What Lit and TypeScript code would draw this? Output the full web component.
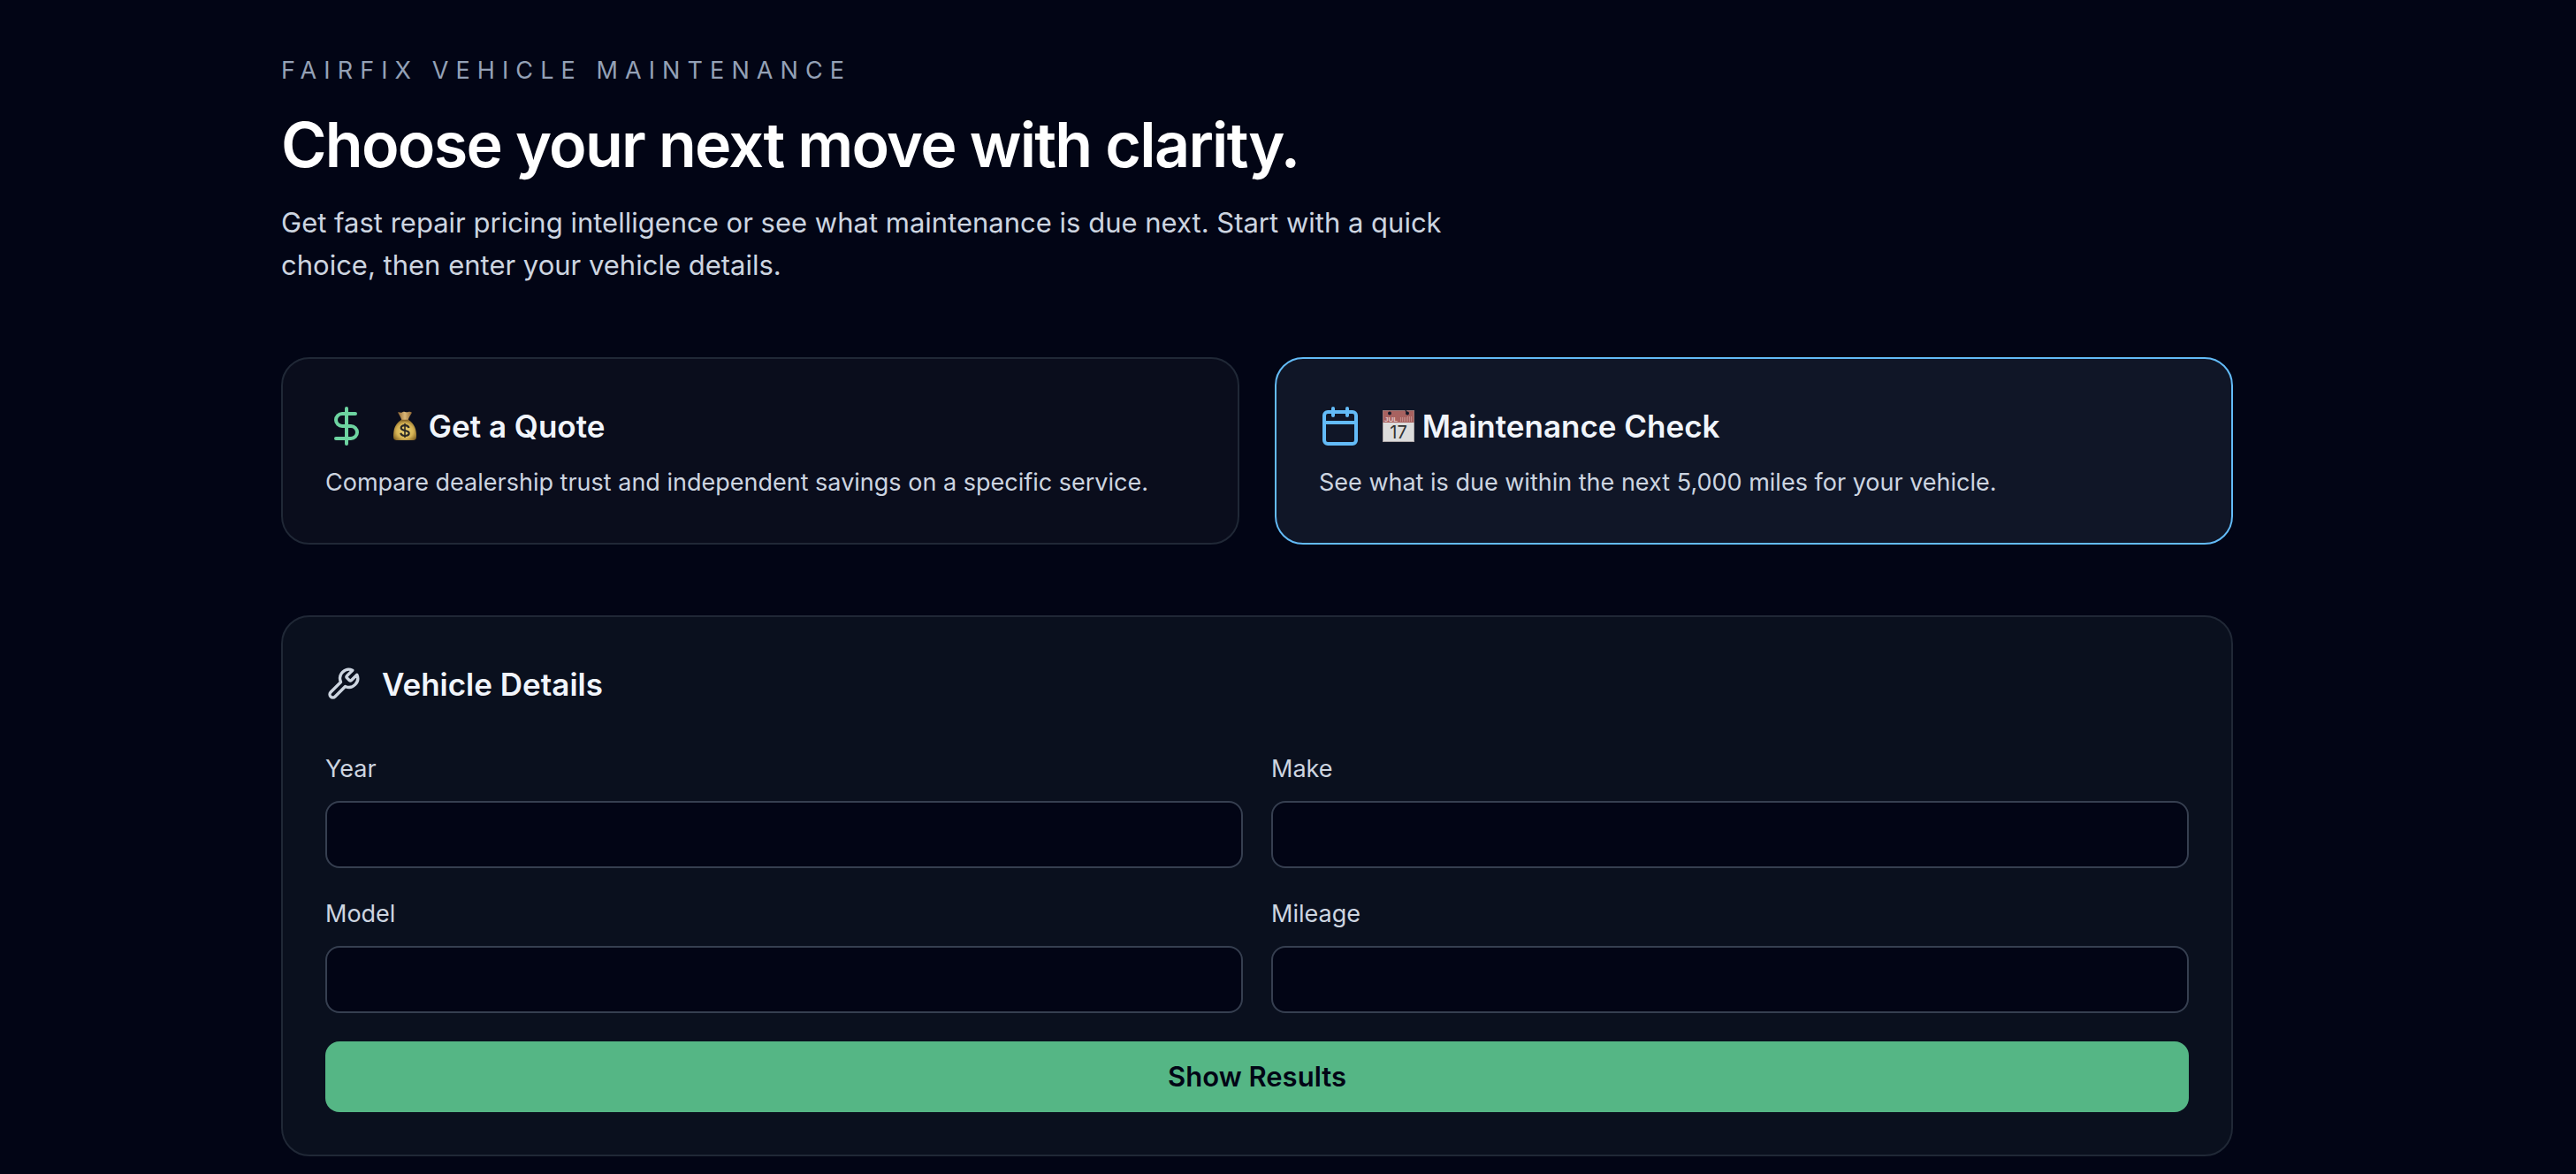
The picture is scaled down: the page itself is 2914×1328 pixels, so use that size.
import { LitElement, html, css } from "lit";
import { customElement, state } from "lit/decorators.js";
import { classMap } from "lit/directives/class-map.js";

const dollarIcon = html`<svg class="icon green" viewBox="0 0 24 24" aria-hidden="true">
  <path d="M12 2v20" />
  <path d="M17 5H9.500a3.500 3.500 0 0 0 0 7h5a3.500 3.500 0 0 1 0 7H6" />
</svg>`;

const calendarIcon = html`<svg class="icon blue" viewBox="0 0 24 24" aria-hidden="true">
  <path d="M8 2v4" />
  <path d="M16 2v4" />
  <rect width="18" height="18" x="3" y="4" rx="2" />
  <path d="M3 10h18" />
</svg>`;

const wrenchIcon = html`<svg class="icon small" viewBox="0 0 24 24" aria-hidden="true">
  <path
    d="M14.700 6.300a1 1 0 0 0 0 1.400l1.600 1.600a1 1 0 0 0 1.400 0l3.770-3.770a6 6 0 0 1-7.940 7.940l-6.910 6.910a2.120 2.120 0 0 1-3-3l6.910-6.910a6 6 0 0 1 7.940-7.940l-3.760 3.760z"
  />
</svg>`;

const bagEmoji = html`<svg class="emoji" viewBox="0 0 36 36" role="img" aria-label="Money bag">
  <defs>
    <radialGradient id="bag" cx="0.5" cy="0.55" r="0.6">
      <stop offset="0" stop-color="#f0d878" />
      <stop offset="0.6" stop-color="#d6b355" />
      <stop offset="1" stop-color="#806022" />
    </radialGradient>
    <linearGradient id="neck" x1="0" x2="1">
      <stop offset="0" stop-color="#8a6230" />
      <stop offset="0.5" stop-color="#dcb878" />
      <stop offset="1" stop-color="#8a6230" />
    </linearGradient>
  </defs>
  <path
    fill="url(#neck)"
    d="M10 2.500c1.500-1 2.500.5 4 .2 1.500-.4 2.500-1.200 4-.8 1.500.3 2.500.8 4 .1 1.500-.5 3 0 4 .7-1.500 2.500-3.500 5-4.500 9h-7C13.500 8 11.500 5 10 2.500z"
  />
  <path
    fill="url(#bag)"
    d="M14.500 11h7c4.500 1.800 8 6.500 9 12.500.6 3.500.8 6.500.2 8.500-.4 1.500-2 2-4 2H9.500c-2 0-3.800-.5-4.200-2-.6-2-.3-5 .2-8.500 1-6 4.500-10.700 9-12.500z"
  />
  <path fill="none" stroke="#8c6a2c" stroke-width="1.500" stroke-linecap="round" d="M14 11.500h8" />
  <g fill="none" stroke="#2c2a26" stroke-width="2.200">
    <path d="M18 15v16" stroke-width="1.600" />
    <path d="M22.500 20c-.5-2-2.300-2.800-4.500-2.800-2.500 0-4.300 1-4.300 2.900 0 4.300 9 1.600 9 6 0 2-2 2.900-4.600 2.900-2.600 0-4.400-1-4.800-3.200" />
  </g>
</svg>`;

const dateEmoji = html`<svg class="emoji" viewBox="0 0 36 36" role="img" aria-label="Calendar">
  <rect width="36" height="36" fill="#dcdcdc" />
  <rect width="36" height="14" fill="#a86260" />
  <rect x="0.5" y="0.5" width="35" height="35" fill="none" stroke="#8f8587" stroke-opacity="0.6" />
  <circle cx="8" cy="3.500" r="2" fill="#131828" />
  <circle cx="28" cy="3.500" r="2" fill="#131828" />
  <path d="M26 0l1.500 3" stroke="#131828" stroke-width="1.200" />
  <text class="month" x="2" y="12.500">JUL</text>
  <path
    d="M20.500 8v5M22.500 8v5M24.500 8v5M26.500 8v5M28.500 7v6M30.500 7v6M32.500 7v6"
    stroke="#c08a88"
    stroke-width="1"
  />
  <text class="day" x="18" y="32" text-anchor="middle">17</text>
</svg>`;

const fields = ["Year", "Make", "Model", "Mileage"];

@customElement("app-root")
export class AppRoot extends LitElement {
  @state() private mode = "check";

  static styles = css`
    :host {
      display: block;
      box-sizing: border-box;
      min-height: 100vh;
      padding-right: 70px;
      background: #020515;
      color: #f1f5fb;
      font-family: Inter, "Liberation Sans", sans-serif;
    }
    * {
      box-sizing: border-box;
    }
    .page {
      max-width: 2304px;
      margin: 0 auto;
      padding: 60px 48px 20px;
      display: flex;
      flex-direction: column;
      gap: 80px;
    }
    .intro {
      display: flex;
      flex-direction: column;
      gap: 24px;
    }
    h1,
    h2,
    p {
      margin: 0;
    }
    .eyebrow {
      font-size: 27px;
      line-height: 40px;
      letter-spacing: 0.3em;
      text-transform: uppercase;
      color: #94a1b6;
    }
    h1 {
      font-size: 70px;
      line-height: 80px;
      font-weight: 600;
      letter-spacing: -0.025em;
      color: #ffffff;
    }
    .lead {
      max-width: 1344px;
      font-size: 31px;
      line-height: 48px;
      color: #cdd5e0;
    }
    .choices {
      display: grid;
      grid-template-columns: 1fr 1fr;
      gap: 40px;
    }
    .choice,
    .panel {
      border: 2px solid #202836;
      border-radius: 32px;
      padding: 48px;
    }
    .choice {
      display: flex;
      flex-direction: column;
      gap: 16px;
      background: #0a0d1c;
      color: inherit;
      font: inherit;
      text-align: left;
      cursor: pointer;
    }
    .choice.selected {
      border-color: #63bbf7;
      background: #101627;
    }
    .heading {
      display: flex;
      align-items: center;
      gap: 24px;
      font-size: 35px;
      line-height: 56px;
      font-weight: 600;
    }
    .note {
      font-size: 27px;
      line-height: 40px;
      color: #cdd5e0;
    }
    .panel {
      display: flex;
      flex-direction: column;
      gap: 48px;
      background: #0a101e;
    }
    h2 {
      font: inherit;
    }
    .form {
      display: grid;
      grid-template-columns: 1fr 1fr;
      gap: 32px;
    }
    .field {
      display: flex;
      flex-direction: column;
      gap: 16px;
      font-size: 27px;
      line-height: 40px;
      color: #cdd5e0;
    }
    input {
      width: 100%;
      height: 76px;
      padding: 16px 24px;
      border: 2px solid #363f50;
      border-radius: 16px;
      background: #020515;
      color: #f1f5fb;
      font: inherit;
    }
    .submit {
      grid-column: 1 / -1;
      height: 80px;
      border: 0;
      border-radius: 16px;
      background: #55b685;
      color: #020515;
      font-family: inherit;
      font-size: 31px;
      line-height: 48px;
      font-weight: 600;
      cursor: pointer;
    }
    .icon {
      flex: none;
      width: 48px;
      height: 48px;
      fill: none;
      stroke: currentColor;
      stroke-width: 2;
      stroke-linecap: round;
      stroke-linejoin: round;
    }
    .small {
      width: 40px;
      height: 40px;
      color: #cdd5e0;
    }
    .green {
      color: #6dd3a0;
    }
    .blue {
      color: #63bbf7;
    }
    .emoji {
      display: inline-block;
      width: 36px;
      height: 36px;
      vertical-align: -5px;
    }
    .month {
      font: 700 8px "Liberation Sans", sans-serif;
      fill: #e0c4c4;
    }
    .day {
      font: 400 20px Inter, sans-serif;
      fill: #333333;
    }
  `;

  private choice(id: string, icon: unknown, emoji: unknown, title: string, note: string) {
    const selected = this.mode === id;
    return html`<button
      type="button"
      class=${classMap({ choice: true, selected })}
      aria-pressed=${selected}
      @click=${() => (this.mode = id)}
    >
      <span class="heading">${icon}<span>${emoji} ${title}</span></span>
      <span class="note">${note}</span>
    </button>`;
  }

  render() {
    return html`<main class="page">
      <header class="intro">
        <p class="eyebrow">FairFix Vehicle Maintenance</p>
        <h1>Choose your next move with clarity.</h1>
        <p class="lead">
          Get fast repair pricing intelligence or see what maintenance is due next. Start with a quick choice, then
          enter your vehicle details.
        </p>
      </header>
      <section class="choices">
        ${this.choice("quote", dollarIcon, bagEmoji, "Get a Quote", "Compare dealership trust and independent savings on a specific service.")}
        ${this.choice("check", calendarIcon, dateEmoji, "Maintenance Check", "See what is due within the next 5,000 miles for your vehicle.")}
      </section>
      <section class="panel">
        <div class="heading">${wrenchIcon}<h2>Vehicle Details</h2></div>
        <form class="form" @submit=${(e: Event) => e.preventDefault()}>
          ${fields.map(
            (name) => html`<label class="field"><span>${name}</span><input name=${name.toLowerCase()} type="text" /></label>`
          )}
          <button class="submit" type="submit">Show Results</button>
        </form>
      </section>
    </main>`;
  }
}
